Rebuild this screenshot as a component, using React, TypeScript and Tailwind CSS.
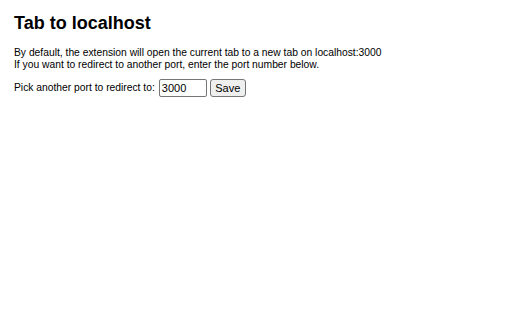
export default function App() {
  return (
    <div className="min-h-[320px] w-[512px] bg-white px-[14px] pt-[12px] text-black font-['Liberation_Sans',Arial,sans-serif]">
      <h1 className="text-[18px] font-bold leading-[22px]">Tab to localhost</h1>
      <p className="mt-[13px] text-[10.3px] leading-[12px]">
        By default, the extension will open the current tab to a new tab on localhost:3000
        <br />
        If you want to redirect to another port, enter the port number below.
      </p>
      <div className="mt-[8px] flex items-center text-[10.3px]">
        <label htmlFor="port">Pick another port to redirect to:</label>
        <input
          id="port"
          defaultValue="3000"
          className="ml-[4px] h-[18px] w-[48px] border border-[#767676] rounded-[2px] px-[2px] text-[11px] outline-none"
        />
        <button className="ml-[3px] h-[18px] w-[36px] rounded-[3px] border border-[#767676] bg-[#efefef] text-[11px]">
          Save
        </button>
      </div>
    </div>
  );
}
